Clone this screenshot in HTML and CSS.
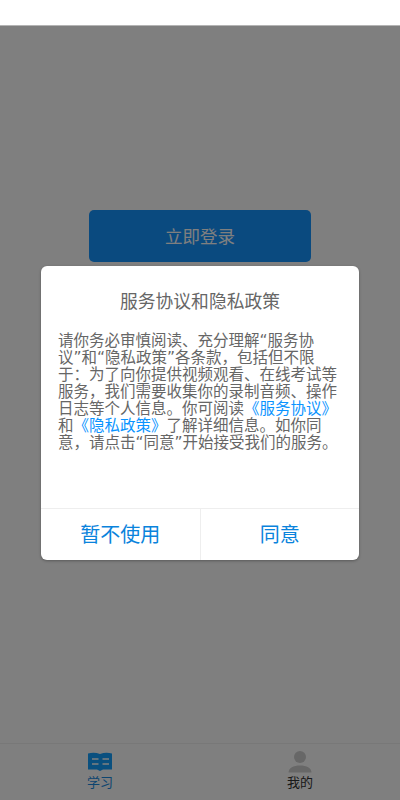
FILE: index.html
```html
<!DOCTYPE html>
<html lang="zh">
<head>
<meta charset="utf-8">
<title>服务协议和隐私政策</title>
<link rel="stylesheet" href="styles.css">
</head>
<body>
<div class="app">
  <div class="status"></div>
  <main class="content">
    <button class="login">立即登录</button>
  </main>
  <nav class="tabs">
    <div class="tab active">
      <svg class="tab-icon" width="26" height="22" viewBox="0 0 26 22"><path class="book" d="M1 2.500C5 1.500 9 1.500 13 3c4-1.500 8-1.500 12-.5V18.500H16L13 20l-3-1.500H1z"/><path class="book-line" d="M5 8h6.500M5 13h6.500M15.500 8H22M15.500 13H22"/></svg>
      <span class="tab-label">学习</span>
    </div>
    <div class="tab">
      <svg class="tab-icon" width="26" height="22" viewBox="0 0 26 22"><circle class="person" cx="13" cy="6" r="6"/><path class="person" d="M1.500 21.500c0-4.500 5-7 11.500-7s11.500 2.500 11.500 7z"/></svg>
      <span class="tab-label">我的</span>
    </div>
  </nav>
</div>
<div class="overlay">
  <section class="dialog">
    <h1 class="title">服务协议和隐私政策</h1>
    <p class="body">请你务必审慎阅读、充分理解“服务协<br>议”和“隐私政策”各条款，包括但不限<br>于：为了向你提供视频观看、在线考试等<br>服务，我们需要收集你的录制音频、操作<br>日志等个人信息。你可阅读<a class="link">《服务协议》</a><br>和<a class="link">《隐私政策》</a>了解详细信息。如你同<br>意，请点击“同意”开始接受我们的服务。</p>
    <div class="actions">
      <button class="action">暂不使用</button>
      <button class="action">同意</button>
    </div>
  </section>
</div>
</body>
</html>
```
FILE: styles.css
```css
* { box-sizing: border-box; }
html, body { margin: 0; height: 100%; }
body {
  position: relative;
  width: 400px;
  height: 800px;
  overflow: hidden;
  background: #fff;
  font-family: "Noto Sans CJK SC", "Liberation Sans", sans-serif;
}
.app { display: flex; flex-direction: column; height: 800px; }
.status { height: 26px; flex: none; background: #fff; border-bottom: 1px solid #b4b4b4; }
.content { flex: 1; display: flex; justify-content: center; padding-top: 184px; }
.login {
  width: 222px; height: 52px; border: 0; border-radius: 5px;
  background: #1594fe; color: #fff; font: inherit; font-size: 17.500px; padding: 0 0 2px;
}
.tabs { height: 57px; flex: none; display: flex; border-top: 1px solid #f0f0f0; background: #fff; }
.tab { flex: 1; display: flex; flex-direction: column; align-items: center; padding-top: 7px; }
.tab-icon { display: block; }
.tab-label { font-size: 13px; line-height: 18px; color: #333; }
.tab.active .tab-label { color: #1a8ae0; }
.book { fill: #14a0ff; }
.book-line { stroke: #fff; stroke-width: 1.500; fill: none; }
.person { fill: #cecece; }
.overlay {
  position: absolute; left: 0; right: 0; top: 26px; bottom: 0;
  background: rgba(0,0,0,.5);
  display: flex; justify-content: center; padding-top: 240px;
}
.dialog {
  width: 318px; height: 294px; background: #fff; border-radius: 6px;
  display: flex; flex-direction: column;
  box-shadow: 0 1px 3px rgba(0,0,0,.3);
}
.title { margin: 0; padding-top: 22px; text-align: center; font-size: 17.800px; line-height: 24px; font-weight: 400; color: #666; }
.body {
  margin: 0; padding: 21px 16px 0 17px; flex: 1; white-space: nowrap;
  font-family: "DejaVu Sans", "Noto Sans CJK SC", sans-serif;
  font-size: 15.500px; line-height: 17px; color: #666;
}
.link { color: #0a94ff; }
.actions { display: flex; height: 52px; flex: none; border-top: 1px solid #eee; }
.action { flex: 1; border: 0; background: none; font: inherit; font-size: 20px; color: #0a83dc; padding: 0 0 2px; }
.action:first-child { border-right: 1px solid #eee; }
```
